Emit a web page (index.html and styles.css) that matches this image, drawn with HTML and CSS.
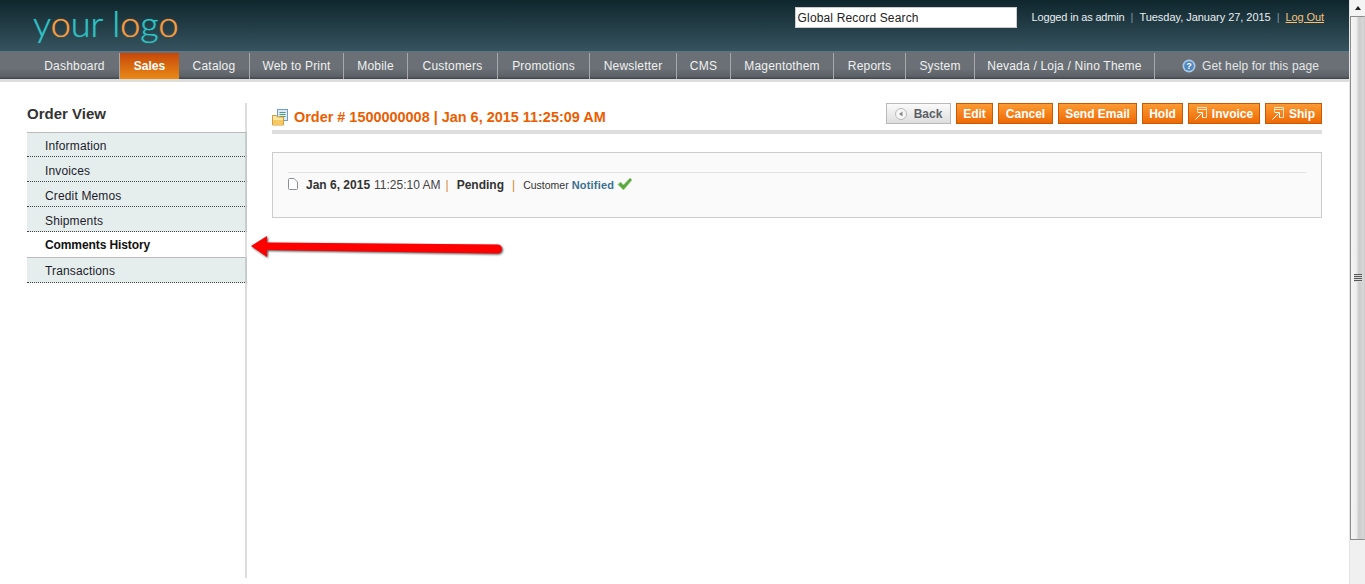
FILE: index.html
```html
<!DOCTYPE html>
<html lang="en">
<head>
<meta charset="utf-8">
<title>Order View</title>
<link rel="stylesheet" href="styles.css">
</head>
<body>
<div class="page">
  <header class="header">
    <div class="logo"><span class="teal">y</span><span class="orange">o</span><span class="teal">ur</span> <span class="teal">l</span><span class="orange">o</span><span class="teal">g</span><span class="orange">o</span></div>
    <div class="header-right">
      <div class="search">Global Record Search</div>
      <div class="user"><span class="logged">Logged in as admin</span><span class="sep">|</span>Tuesday, January 27, 2015<span class="sep">|</span><a class="logout">Log Out</a></div>
    </div>
  </header>
  <nav class="nav">
    <a class="nav-item">Dashboard</a>
    <a class="nav-item active">Sales</a>
    <a class="nav-item">Catalog</a>
    <a class="nav-item">Web to Print</a>
    <a class="nav-item">Mobile</a>
    <a class="nav-item">Customers</a>
    <a class="nav-item">Promotions</a>
    <a class="nav-item">Newsletter</a>
    <a class="nav-item">CMS</a>
    <a class="nav-item">Magentothem</a>
    <a class="nav-item">Reports</a>
    <a class="nav-item">System</a>
    <a class="nav-item">Nevada / Loja / Nino Theme</a>
    <a class="help">
      <svg class="help-icon" viewBox="0 0 14 14" width="14" height="14"><circle cx="7" cy="7" r="6.5" fill="#a9cbe9"/><circle cx="7" cy="7" r="4.8" fill="#4f86c0"/><text x="7" y="10.2" class="help-q">?</text></svg>
      Get help for this page</a>
  </nav>
  <div class="main">
    <aside class="side">
      <h3 class="side-title">Order View</h3>
      <ul class="tabs">
        <li class="tab">Information</li>
        <li class="tab">Invoices</li>
        <li class="tab">Credit Memos</li>
        <li class="tab">Shipments</li>
        <li class="tab current">Comments History</li>
        <li class="tab after">Transactions</li>
      </ul>
    </aside>
    <section class="content">
      <div class="head">
        <h3 class="title">
          <svg class="title-icon" viewBox="0 0 16 17" width="16" height="17"><rect x="5.500" y="0.500" width="10" height="11" fill="#dfeaf6" stroke="#6f9ccc"/><path d="M7.500 3.500h6M7.500 5.500h6M7.500 7.500h6" stroke="#4f9a7a"/><path d="M0.500 6.500h4l1 1.500h6v8h-11z" fill="#fbe6a4" stroke="#d29a3a"/><rect x="1" y="11" width="10" height="5" fill="#f5c95f"/></svg>
          Order # 1500000008 | Jan 6, 2015 11:25:09 AM</h3>
        <div class="actions">
          <button class="btn back"><svg class="back-icon" viewBox="0 0 12 12" width="12" height="12"><circle cx="6" cy="6" r="5.500" fill="#f6f6f6" stroke="#bbb"/><path d="M7.500 3.500v5l-3.500-2.500z" fill="#888"/></svg>Back</button>
          <button class="btn">Edit</button>
          <button class="btn">Cancel</button>
          <button class="btn">Send Email</button>
          <button class="btn">Hold</button>
          <button class="btn"><svg class="go" viewBox="0 0 12 13" width="12" height="13"><path d="M2.500 5.500V.5h9v10H7M3 2.500h8" fill="none" stroke="#fde3c6"/><path d="M.5 12.500l6-6M3 5.500h4.500V10" fill="none" stroke="#fff"/></svg>Invoice</button>
          <button class="btn"><svg class="go" viewBox="0 0 12 13" width="12" height="13"><path d="M2.500 5.500V.5h9v10H7M3 2.500h8" fill="none" stroke="#fde3c6"/><path d="M.5 12.500l6-6M3 5.500h4.500V10" fill="none" stroke="#fff"/></svg>Ship</button>
        </div>
      </div>
      <div class="box">
        <div class="entry">
          <svg class="doc" viewBox="0 0 10 12" width="10" height="12"><path d="M.5 1.500a1 1 0 0 1 1-1h4.500l3.500 3.500v6.500a1 1 0 0 1-1 1h-7a1 1 0 0 1-1-1z" fill="#fff" stroke="#8a8f94"/></svg>
          <strong class="date">Jan 6, 2015</strong>
          <span class="time">11:25:10 AM</span>
          <span class="bar first-bar">|</span>
          <strong class="status">Pending</strong>
          <span class="bar second-bar">|</span>
          <span class="cust">Customer</span>
          <strong class="notified">Notified</strong>
          <svg class="check" viewBox="0 0 16 14" width="16" height="14"><path d="M1 7.500l2.500-2.500 3 3L13 1l2 2-8.500 10z" fill="#5aa93f" stroke="#9ccf8a" stroke-width=".6"/></svg>
        </div>
      </div>
    </section>
  </div>
  <svg class="arrow" viewBox="0 0 256 28" width="256" height="28"><path d="M2 10 L18 0 L18 6.500 L248.500 8.500 A4.500 4.500 0 0 1 248.500 17.500 L18 14 L18 21 Z" fill="#f00"/></svg>
  <div class="scrollbar">
    <div class="sb-btn"><span class="sb-up"></span></div>
    <div class="sb-thumb"><span class="grip"></span></div>
  </div>
</div>
</body>
</html>
```
FILE: styles.css
```css
* { box-sizing: border-box; }
html, body { margin: 0; padding: 0; height: 100%; overflow: hidden; background: #fff; }
body { font: 12px/16px "Liberation Sans", Arial, sans-serif; color: #2f2f2f; }
.page { position: relative; width: 1365px; height: 584px; padding-right: 16px; overflow: hidden; }
.header { height: 51px; display: flex; justify-content: space-between; background: linear-gradient(#0f262d, #36535f); }
.logo { font: 300 36px/40px "Lato", "Liberation Sans", sans-serif; padding: 3px 0 0 33px; text-shadow: 0 0 1px currentColor; }
.teal { color: #2fc0c0; }
.orange { color: #f79c3e; }
.header-right { display: flex; align-items: flex-start; padding: 7px 25px 0 0; }
.search { width: 222px; height: 21px; background: #fff; border: 1px solid #ccc; color: #222; padding: 2px; font-size: 12px; line-height: 16px; margin-right: 15px; letter-spacing: .15px; }
.user { color: #e8eef0; font-size: 11px; line-height: 20px; white-space: nowrap; letter-spacing: -.03px; }
.logged { letter-spacing: -.17px; }
.sep { color: #7d99a5; margin: 0 6px; }
.logout { color: #f7c37a; text-decoration: underline; letter-spacing: -.1px; }
.nav { height: 31px; display: grid; grid-template-columns: 90px 59px 71px 94px 64px 90px 92px 87px 54px 103px 72px 69px 180px 1fr; margin: 0; padding-left: 30px; border-top: 1px solid #5b7785; border-bottom: 3px solid #ddd; background: linear-gradient(#6a7076 0, #6a7076 60%, #5c6268 90%, #3f4448 100%); letter-spacing: .2px; }
.nav-item { color: #f0f0f0; display: flex; align-items: center; justify-content: center; border-right: 1px solid #a5a9ad; margin-top: 1px; white-space: nowrap; }
.nav-item.active { color: #fff; font-weight: bold; background: linear-gradient(#c6470a, #e98a16); border: 0; letter-spacing: 0; }
.help { justify-self: end; margin-right: 30px; color: #e4e6e8; display: flex; align-items: center; gap: 6px; letter-spacing: .1px; }
.help-icon { display: block; }
.help-q { font: bold 9px "Liberation Sans", sans-serif; fill: #fff; text-anchor: middle; }
.main { display: flex; align-items: stretch; padding: 20px 27px 0 27px; height: 502px; }
.side { width: 220px; flex: none; border-right: 2px solid #ddd; margin: 1px 0 6px; }
.side-title { margin: 0; font-size: 15px; line-height: 20px; font-weight: bold; color: #333; padding-top: 1px; height: 29px; }
.tabs { list-style: none; margin: 0 -2px 0 0; padding: 0; border-top: 1px solid #bbb; }
.tab { height: 25px; line-height: 24px; padding: 2px 0 0 18px; background: #e6eeed; border-bottom: 1px dotted #444; border-right: 2px solid #c4cccc; color: #1c1c2c; letter-spacing: .15px; }
.tab:first-child { height: 24px; padding-top: 1px; }
.tab.current { background: #fff; font-weight: bold; color: #111; height: 26px; line-height: 23px; border-bottom: 1px solid #bbb; border-right: 2px solid #ddd; letter-spacing: -.1px; }
.tab.after { padding-top: 1px; }
.content { flex: 1; margin-left: 25px; min-width: 0; }
.head { display: flex; justify-content: space-between; align-items: flex-start; height: 32px; border-bottom: 4px solid #ddd; }
.title { margin: 0; color: #eb5e00; font-size: 14.450px; line-height: 18px; font-weight: bold; display: flex; align-items: center; gap: 6px; padding-top: 6px; white-space: nowrap; }
.title-icon { flex: none; }
.actions { display: grid; grid-template-columns: 65px 37px 55px 79px 41px 72px 57px; gap: 5px; padding-top: 1px; }
.btn { font: bold 12px/15px "Liberation Sans", sans-serif; height: 21px; padding: 1px 0 0; color: #fff; background: linear-gradient(#fd9a32, #ed6a06); border: 1px solid #c85a06; display: flex; align-items: center; justify-content: center; white-space: nowrap; }
.btn.back { background: linear-gradient(#fafafa, #dedede); border-color: #b9b9b9; color: #5a5f66; }
.back-icon { margin-right: 7px; }
.go { margin-right: 5px; margin-top: -1px; }
.box { margin-top: 18px; height: 66px; border: 1px solid #ccc; background: #fafafa; padding: 19px 15px 0; }
.entry { display: flex; align-items: center; height: 25px; border-top: 1px solid #e2e2e2; color: #333; white-space: nowrap; }
.doc { flex: none; margin-right: 8px; margin-top: -2px; }
.date { margin-right: 4px; }
.time { color: #444; }
.bar { color: #d8892e; }
.first-bar { margin: 0 8px 0 5px; }
.second-bar { margin: 0 8px; }
.cust { font-size: 10.500px; margin-right: 3px; color: #333; }
.notified { color: #3a7090; font-size: 11px; letter-spacing: .2px; }
.check { flex: none; margin-left: 3px; margin-top: -3px; }
.arrow { position: absolute; left: 249px; top: 236px; filter: drop-shadow(1.500px 1.500px 1px rgba(0,0,0,.7)); }
.scrollbar { position: absolute; right: 0; top: 0; width: 16px; height: 584px; background: #f0f0f0; border-left: 1px solid #e4e4e4; }
.sb-btn { height: 16px; background: #f4f4f4; display: flex; align-items: center; justify-content: center; }
.sb-up { width: 0; height: 0; border: 3px solid transparent; border-bottom: 4px solid #222; border-top: 0; }
.sb-thumb { height: 524px; display: flex; align-items: center; justify-content: center; border: 1px solid #8c8c8c; border-right-color: #ccc; background: linear-gradient(90deg, #f4f4f4, #eee 40%, #ccc 60%, #d8d8d8); }
.grip { width: 8px; height: 8px; background: repeating-linear-gradient(#555 0, #555 1px, #ddd 1px, #ddd 2px); }
```
